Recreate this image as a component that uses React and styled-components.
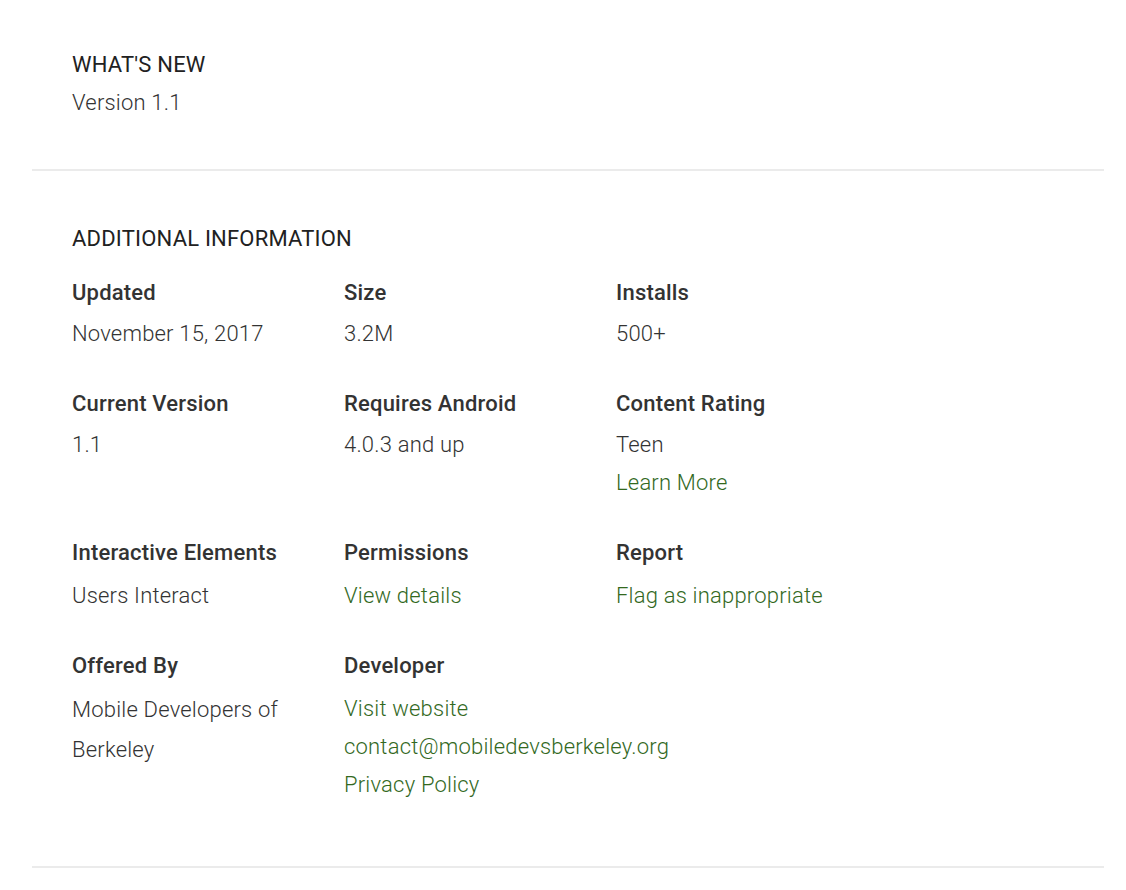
import React from 'react';
import styled, { createGlobalStyle } from 'styled-components';

const GlobalStyle = createGlobalStyle`
  body {
    margin: 0;
    background: #fff;
    font-family: Roboto, "Liberation Sans", Arial, sans-serif;
    letter-spacing: 0.2px;
  }
`;

const Page = styled.div`
  width: 1072px;
  margin-left: 32px;
`;

const Section = styled.section`
  padding: ${(p) => p.$pad || '53px 40px 47px'};
  border-bottom: 2px solid #ebebeb;
`;

const Heading = styled.h2`
  margin: 0;
  font-size: 22px;
  line-height: 24px;
  font-weight: 400;
  color: #212121;
  text-transform: uppercase;
`;

const Text = styled.div`
  font-size: 22px;
  line-height: ${(p) => p.$lh || '38px'};
  font-weight: 300;
  color: #333;
  margin-top: ${(p) => p.$mt || '0'};
  padding-right: 16px;
`;

const Grid = styled.div`
  display: grid;
  grid-template-columns: repeat(3, 272px);
  row-gap: 39px;
  margin-top: 30px;
`;

const Cell = styled.div`
  display: flex;
  flex-direction: column;
`;

const Label = styled.div`
  font-size: 22px;
  line-height: 24px;
  font-weight: 500;
  color: #333;
  margin-bottom: ${(p) => p.$gap || '10px'};
`;

const Link = styled.a`
  display: block;
  font-size: 22px;
  line-height: 38px;
  font-weight: 300;
  color: #33691e;
  text-decoration: none;
  white-space: nowrap;
`;

const info = [
  { label: 'Updated', values: [{ text: 'November 15, 2017' }] },
  { label: 'Size', values: [{ text: '3.2M' }] },
  { label: 'Installs', values: [{ text: '500+' }] },
  { label: 'Current Version', values: [{ text: '1.1' }] },
  { label: 'Requires Android', values: [{ text: '4.0.3 and up' }] },
  { label: 'Content Rating', values: [{ text: 'Teen' }, { text: 'Learn More', link: true }] },
  { label: 'Interactive Elements', values: [{ text: 'Users Interact' }] },
  { label: 'Permissions', values: [{ text: 'View details', link: true }] },
  { label: 'Report', values: [{ text: 'Flag as inappropriate', link: true }] },
  { label: 'Offered By', values: [{ text: 'Mobile Developers of Berkeley', wrap: true }] },
  {
    label: 'Developer',
    values: [
      { text: 'Visit website', link: true },
      { text: 'contact@mobiledevsberkeley.org', link: true },
      { text: 'Privacy Policy', link: true },
    ],
  },
];

const App = () => {
  return (
    <Page>
      <GlobalStyle />
      <Section>
        <Heading>What's New</Heading>
        <Text $mt="7px">Version 1.1</Text>
      </Section>
      <Section $pad="56px 40px 62px">
        <Heading>Additional Information</Heading>
        <Grid>
          {info.map((item, i) => (
            <Cell key={item.label}>
              <Label $gap={i >= 6 ? '12px' : '10px'}>{item.label}</Label>
              {item.values.map((v) =>
                v.link ? (
                  <Link key={v.text} href="#">{v.text}</Link>
                ) : (
                  <Text key={v.text} $lh={v.wrap ? '40px' : '38px'}>{v.text}</Text>
                )
              )}
            </Cell>
          ))}
        </Grid>
      </Section>
    </Page>
  );
};

export default App;
